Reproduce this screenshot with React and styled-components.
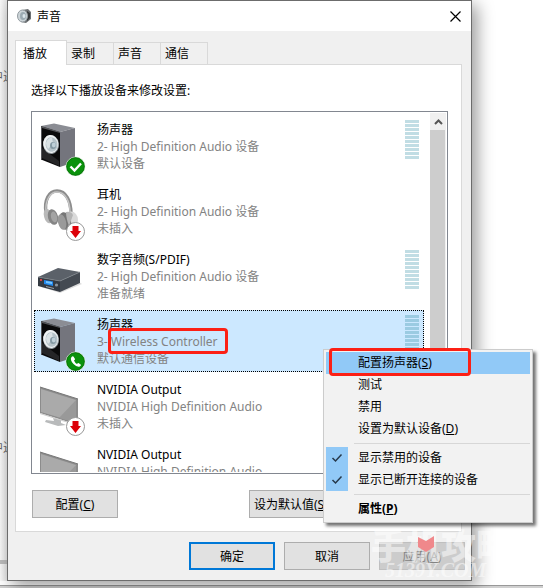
import React, { useState } from 'react'
import styled, { createGlobalStyle } from 'styled-components'

const devices = [
  { id: 1, name: '扬声器', driver: '2- High Definition Audio 设备', status: '默认设备', icon: 'speaker', badge: 'ok', meter: true },
  { id: 2, name: '耳机', driver: '2- High Definition Audio 设备', status: '未插入', icon: 'headphones', badge: 'unplugged' },
  { id: 3, name: '数字音频(S/PDIF)', driver: '2- High Definition Audio 设备', status: '准备就绪', icon: 'digital', meter: true },
  { id: 4, name: '扬声器', prefix: '3- ', driver: 'Wireless Controller', status: '默认通信设备', icon: 'speaker', badge: 'phone', meter: true },
  { id: 5, name: 'NVIDIA Output', driver: 'NVIDIA High Definition Audio', status: '未插入', icon: 'monitor', badge: 'unplugged' },
  { id: 6, name: 'NVIDIA Output', driver: 'NVIDIA High Definition Audio', status: '未插入', icon: 'monitor', badge: 'unplugged' },
]

const tabs = ['播放', '录制', '声音', '通信']

function Speaker() {
  return (
    <>
      <path d="M6 10 L19 7.500 L40 12 L25 16Z" fill="#8b8d94" />
      <path d="M25 16 L40 12 V46 L25 51Z" fill="#74757d" />
      <path d="M6 10 L25 16 V51 L6 43.500Z" fill="#0a0a0b" />
      <path d="M6 10 L25 16 V17 L7 12 V43 L6 43Z" fill="#55565a" />
      <path d="M7 32 L24 45 V50 L7 42Z" fill="#252527" />
      <ellipse cx="16" cy="28.500" rx="8" ry="9.500" fill="#8e969b" transform="rotate(-8 16 28.500)" />
      <ellipse cx="15.800" cy="28" rx="7.500" ry="9" fill="#eef1f2" transform="rotate(-8 15.800 28)" />
      <ellipse cx="16.500" cy="28.500" rx="6" ry="7.200" fill="#b6c3c9" transform="rotate(-8 16.500 28.500)" />
      <path d="M11 27 Q13 21.500 17 21.500 L18 28 L13 33 Q11 30 11 27Z" fill="#dae2e5" />
      <ellipse cx="18" cy="29.500" rx="3" ry="3.500" fill="#8499a3" />
      <ellipse cx="18.800" cy="29" rx="2" ry="2.400" fill="#bfd0d8" />
    </>
  )
}

function Headphones() {
  return (
    <>
      <path d="M11 32 C9 19 14 10 22 10 C31 10 36 20 36 33" fill="none" stroke="#8d8d8d" strokeWidth="3.4" />
      <path d="M11 31 C10 19 15 11 22 11 C30 11 35 20 35 31" fill="none" stroke="#c6c6c6" strokeWidth="1.4" />
      <ellipse cx="13" cy="35" rx="4" ry="7.5" fill="#b9b9b9" transform="rotate(-14 13 35)" />
      <ellipse cx="18" cy="36" rx="5" ry="8" fill="#858585" transform="rotate(-14 18 36)" />
      <ellipse cx="19" cy="36" rx="3" ry="5.5" fill="#a4a4a4" transform="rotate(-14 19 36)" />
      <ellipse cx="36" cy="39" rx="7" ry="8.5" fill="#dadada" />
      <ellipse cx="30" cy="40" rx="6" ry="9" fill="#777" transform="rotate(-14 30 40)" />
      <ellipse cx="27" cy="41" rx="4" ry="8" fill="#9a9a9a" transform="rotate(-14 27 41)" />
      <path d="M31 31 Q36 30 38 34 L34 45 Q31 37 31 31Z" fill="#b5b5b5" />
    </>
  )
}

function DigitalBox() {
  return (
    <>
      <path d="M6 41 L25 47 L47 38 L44 36Z" fill="#ddd" />
      <path d="M3 31 L23 22 L45 26 L25 35Z" fill="#5b6169" />
      <path d="M3 31 L25 35 V46 L3 40Z" fill="#343a42" />
      <path d="M25 35 L45 26 V37 L25 46Z" fill="#444a52" />
      <path d="M3 31 L25 35 L45 26" fill="none" stroke="#80868d" strokeWidth="0.7" />
      <path d="M9 34 L18 35.5 V40 L9 38Z" fill="#2389ee" />
      <path d="M11 35 L17 36 V38 L11 37Z" fill="#75c5ff" />
      <path d="M11 40.5 L19 42.5" stroke="#9ba0a5" strokeWidth="1" />
      <rect x="5" y="33" width="2" height="2" fill="#d1454b" />
      <circle cx="21.5" cy="39" r="1.6" fill="#8c949c" />
    </>
  )
}

function Monitor() {
  return (
    <>
      <path d="M18 42 L26 44 L26 47 L31 49 L23 50 L10 46 L11 44 L19 45Z" fill="#b8babb" />
      <path d="M5 11 L43 23 V49 L5 37Z" fill="#8c8c8c" />
      <path d="M6 13 L41 24 V46.500 L6 36Z" fill="#aaa" />
      <path d="M41 24 L24 42 L41 46.500Z" fill="#999" />
      <path d="M5 11 L43 23" stroke="#777" strokeWidth="1" />
      <path d="M5 37.500 L43 49.500" stroke="#ccc" strokeWidth="1" />
    </>
  )
}

const icons = { speaker: Speaker, headphones: Headphones, digital: DigitalBox, monitor: Monitor }

function Badge({ kind }) {
  if (kind === 'unplugged') {
    return (
      <>
        <circle cx="40.500" cy="50.500" r="9" fill="#fff" stroke="#999" />
        <path d="M37.500 45 H43.500 V50 H46 L40.500 57 L35 50 H37.500Z" fill="#dc0008" />
      </>
    )
  }
  return (
    <>
      <circle cx="40.500" cy="50.500" r="9.500" fill="#0a920c" stroke="#e4eee4" strokeWidth="0.8" />
      <circle cx="40.500" cy="50.500" r="8.800" fill="none" stroke="#087008" strokeWidth="0.8" />
      {kind === 'ok' && <path d="M35.500 50.500 L39.500 54.500 L46 47.500" fill="none" stroke="#fff" strokeWidth="2.400" />}
      {kind === 'phone' && (
        <path
          d="M36.500 46 Q38 44.500 38.800 46 L40 48 Q40.200 48.800 39 49.500 Q40 52 42 53 Q43 51.800 43.800 52.200 L45.700 53.400 Q46.500 54.500 44.800 55.500 Q42 56.500 38.500 53 Q34.500 48.500 36.500 46Z"
          fill="#fff"
        />
      )}
    </>
  )
}

function DeviceIcon({ icon, badge }) {
  const Drawing = icons[icon]
  return (
    <svg width="56" height="60" viewBox="0 0 56 60" aria-hidden="true">
      <Drawing />
      {badge && <Badge kind={badge} />}
    </svg>
  )
}

function Check() {
  return (
    <svg width="12" height="10" viewBox="0 0 12 10" fill="none" stroke="#26384a" strokeWidth="1.500" aria-hidden="true">
      <path d="M1.500 5 L4.500 8 L10.500 1.500" />
    </svg>
  )
}

function App() {
  const [activeTab, setActiveTab] = useState('播放')
  const [selected, setSelected] = useState(4)

  return (
    <Page>
      <GlobalStyle />
      <Desktop>
        <Behind>
          <span>中进</span>
          <span>中进</span>
          <Rule />
        </Behind>
        <Dialog role="dialog" aria-label="声音">
          <TitleBar>
            <svg width="14" height="14" viewBox="0 0 14 14" aria-hidden="true">
              <path d="M5 1 L11 0 L14 3 V10 L9 14 L4 13Z" fill="#6d7174" />
              <path d="M10 2 L13 4 V9 L10 12Z" fill="#35383a" />
              <ellipse cx="5.500" cy="7" rx="5" ry="6" fill="#ccd4d8" stroke="#959da2" />
              <ellipse cx="6" cy="7" rx="3" ry="4" fill="#9cabb3" />
              <ellipse cx="7" cy="7" rx="1.500" ry="2" fill="#dce7ec" />
            </svg>
            <Title>声音</Title>
            <CloseButton aria-label="关闭">
              <svg width="11" height="11" viewBox="0 0 11 11" stroke="#000" strokeWidth="1.200" aria-hidden="true">
                <path d="M0.500 0.500 L10.500 10.500 M10.500 0.500 L0.500 10.500" />
              </svg>
            </CloseButton>
          </TitleBar>

          <Tabs role="tablist">
            {tabs.map((tab) => (
              <Tab key={tab} role="tab" aria-selected={tab === activeTab} $active={tab === activeTab} onClick={() => setActiveTab(tab)}>
                {tab}
              </Tab>
            ))}
          </Tabs>

          <Panel role="tabpanel">
            <Hint id="hint">选择以下播放设备来修改设置:</Hint>
            <ListBox>
              <Devices role="listbox" aria-labelledby="hint">
                {devices.map((device) => (
                  <Device key={device.id} role="option" aria-selected={device.id === selected} $selected={device.id === selected} onClick={() => setSelected(device.id)}>
                    <DeviceIcon icon={device.icon} badge={device.badge} />
                    <DeviceText>
                      <DeviceName>{device.name}</DeviceName>
                      <span>
                        {device.prefix}
                        {device.prefix ? <Marked>{device.driver}</Marked> : device.driver}
                      </span>
                      <span>{device.status}</span>
                    </DeviceText>
                    {device.meter && <Meter $selected={device.id === selected} />}
                  </Device>
                ))}
              </Devices>
              <ScrollBar>
                <ScrollButton aria-label="向上滚动">
                  <svg width="9" height="6" viewBox="0 0 9 6" fill="none" stroke="#555" strokeWidth="2" aria-hidden="true">
                    <path d="M1 5 L4.500 1.500 L8 5" />
                  </svg>
                </ScrollButton>
                <Thumb />
              </ScrollBar>
            </ListBox>
            <PanelButtons>
              <Button>配置(<u>C</u>)</Button>
              <SplitButton>设为默认值(<u>S</u>)</SplitButton>
            </PanelButtons>
          </Panel>

          <Actions>
            <Button $primary>确定</Button>
            <Button>取消</Button>
            <Button disabled>应用(<u>A</u>)</Button>
          </Actions>

          <Menu role="menu">
            <MenuItem role="menuitem" $hover><Gutter /><Label>配置扬声器(<u>S</u>)</Label></MenuItem>
            <MenuItem role="menuitem"><Gutter /><Label>测试</Label></MenuItem>
            <MenuItem role="menuitem"><Gutter /><Label>禁用</Label></MenuItem>
            <MenuItem role="menuitem"><Gutter /><Label>设置为默认设备(<u>D</u>)</Label></MenuItem>
            <Separator />
            <MenuItem role="menuitemcheckbox" aria-checked="true"><Gutter $checked><Check /></Gutter><Label>显示禁用的设备</Label></MenuItem>
            <MenuItem role="menuitemcheckbox" aria-checked="true"><Gutter $checked><Check /></Gutter><Label>显示已断开连接的设备</Label></MenuItem>
            <Separator />
            <MenuItem role="menuitem" $bold><Gutter /><Label>属性(<u>P</u>)</Label></MenuItem>
          </Menu>

          <Watermark>
            <strong>手机攻略</strong>
            <em>5139Y.COM</em>
            <svg width="18" height="17" viewBox="0 0 18 17" aria-hidden="true">
              <path d="M1 1 L9 5 L17 0 V11 L9 16 L1 11Z" fill="#f0888b" />
            </svg>
          </Watermark>
        </Dialog>
      </Desktop>
      <Footer />
    </Page>
  )
}

const GlobalStyle = createGlobalStyle`
  * {
    box-sizing: border-box;
  }
  body {
    margin: 0;
    background: #fff;
    overflow: hidden;
    color: #000;
    font: 12px/17px "Noto Sans", "Noto Sans CJK SC", sans-serif;
  }
  button {
    margin: 0;
    padding: 0;
    color: inherit;
    font: inherit;
  }
`

const Page = styled.div`
  display: flex;
  flex-direction: column;
`

const Desktop = styled.div`
  display: flex;
  padding-right: 71px;
`

const Behind = styled.div`
  display: flex;
  flex-direction: column;
  align-items: flex-end;
  width: 7px;
  background: linear-gradient(90deg, #f8f8f8, #e4e4e4);
  color: #666;
  white-space: nowrap;
  span {
    width: 16px;
    margin-top: 68px;
  }
  span + span {
    margin-top: 354px;
  }
`

const Rule = styled.div`
  width: 7px;
  height: 4px;
  margin-top: 104px;
  background: #bbb;
`

const Dialog = styled.main`
  position: relative;
  flex: 1;
  min-width: 0;
  border: 1px solid #6c6c6c;
  background: #f0f0f0;
  box-shadow: 5px 5px 16px rgba(0, 0, 0, 0.4);
`

const TitleBar = styled.header`
  display: flex;
  align-items: center;
  gap: 6px;
  height: 30px;
  padding-left: 9px;
  background: #fff;
`

const Title = styled.h1`
  flex: 1;
  margin: 0;
  font-size: 12px;
  font-weight: 400;
`

const CloseButton = styled.button`
  display: flex;
  align-items: center;
  justify-content: center;
  width: 31px;
  height: 30px;
  border: 0;
  background: none;
`

const Tabs = styled.div`
  display: flex;
  align-items: flex-end;
  padding: 9px 7px 0;
`

const Tab = styled.button`
  position: relative;
  width: ${({ $active }) => ($active ? 52 : 47)}px;
  height: ${({ $active }) => ($active ? 25 : 22)}px;
  margin-bottom: ${({ $active }) => ($active ? -1 : 0)}px;
  padding-left: ${({ $active }) => ($active ? 7 : 4)}px;
  border: solid #d9d9d9;
  border-width: ${({ $active }) => ($active ? '1px 1px 0' : '1px 1px 0 0')};
  background: ${({ $active }) => ($active ? '#fff' : '#f0f0f0')};
  text-align: left;
  z-index: ${({ $active }) => ($active ? 1 : 0)};
`

const Panel = styled.section`
  margin: 0 9px 0 7px;
  padding: 17px 13px 13px 15px;
  border: 1px solid #d9d9d9;
  background: #fff;
`

const Hint = styled.p`
  margin: 0 0 12px;
`

const ListBox = styled.div`
  display: flex;
  height: 363px;
  padding: 1px 1px 1px 2px;
  border: 1px solid #828790;
  overflow: hidden;
`

const Devices = styled.ul`
  flex: 1;
  margin: 0 6px 0 0;
  padding: 2px 0 0;
  overflow: hidden;
  list-style: none;
`

const Device = styled.li`
  display: flex;
  gap: 6px;
  height: 62px;
  margin-bottom: 3px;
  border: 1px dotted ${({ $selected }) => ($selected ? '#000' : 'transparent')};
  background: ${({ $selected }) => ($selected ? '#cce8ff' : 'transparent')};
  svg {
    flex: none;
  }
`

const DeviceText = styled.div`
  display: flex;
  flex: 1;
  flex-direction: column;
  padding-top: 5px;
  color: #838383;
  white-space: nowrap;
`

const DeviceName = styled.span`
  color: #000;
`

const Marked = styled.mark`
  position: relative;
  background: none;
  color: inherit;
  &::after {
    content: '';
    position: absolute;
    inset: -5px -10px -4px -3px;
    border: 3px solid #fc2015;
    border-radius: 4px;
  }
`

const Meter = styled.div`
  width: 14px;
  height: 39px;
  margin: 4px 4px 0 0;
  background: repeating-linear-gradient(
    ${({ $selected }) => ($selected ? '#9bcbe2' : '#c1dde4')} 0 3px,
    transparent 3px 4px
  );
`

const ScrollBar = styled.div`
  display: flex;
  flex-direction: column;
  width: 16px;
  background: #f0f0f0;
`

const ScrollButton = styled.button`
  display: flex;
  align-items: center;
  justify-content: center;
  height: 17px;
  border: 0;
  background: #f0f0f0;
`

const Thumb = styled.div`
  flex: 1;
  margin-right: 1px;
  background: #cdcdcd;
`

const Button = styled.button`
  width: 86px;
  height: 28px;
  border: ${({ $primary }) => ($primary ? '2px solid #0078d7' : '1px solid #adadad')};
  background: #e1e1e1;
  &:disabled {
    border-color: #bfbfbf;
    background: #ccc;
    color: #838383;
  }
`

const SplitButton = styled(Button)`
  width: 120px;
  padding-left: 4px;
  text-align: left;
`

const PanelButtons = styled.div`
  display: flex;
  justify-content: space-between;
  padding: 16px 79px 0 1px;
`

const Actions = styled.div`
  display: flex;
  justify-content: flex-end;
  gap: 9px;
  padding: 10px 6px;
`

const Menu = styled.div`
  position: absolute;
  top: 348px;
  right: -62px;
  width: 210px;
  padding: 2px;
  border: 1px solid #ccc;
  background: #f2f2f2;
  box-shadow: 3px 3px 3px rgba(0, 0, 0, 0.55);
  z-index: 2;
`

const MenuItem = styled.button`
  position: relative;
  display: flex;
  align-items: center;
  gap: 10px;
  width: 100%;
  height: 22px;
  border: 0;
  background: ${({ $hover }) => ($hover ? '#91c9f7' : 'transparent')};
  font-weight: ${({ $bold }) => ($bold ? 700 : 400)};
  text-align: left;
  &:first-child::after {
    content: '';
    position: absolute;
    inset: -4px 59px -2px 3px;
    border: 3px solid #fc2015;
    border-radius: 4px;
  }
`

const Label = styled.span`
  padding-bottom: 2px;
`

const Gutter = styled.span`
  display: flex;
  align-items: center;
  justify-content: center;
  width: 22px;
  height: 22px;
  background: ${({ $checked }) => ($checked ? '#91c9f7' : 'transparent')};
`

const Separator = styled.div`
  height: 1px;
  margin: 3px 0 3px 28px;
  background: #d7d7d7;
`

const Watermark = styled.div`
  position: absolute;
  right: -42px;
  bottom: 2px;
  display: flex;
  flex-direction: column;
  width: 142px;
  color: rgba(255, 255, 255, 0.5);
  white-space: nowrap;
  pointer-events: none;
  z-index: 1;
  strong {
    font-size: 35px;
    font-weight: 900;
    line-height: 32px;
  }
  em {
    padding-left: 14px;
    font: italic 700 20px/16px "Liberation Serif", serif;
  }
  svg {
    position: absolute;
    top: 6px;
    left: 46px;
  }
`

const Footer = styled.footer`
  height: 7px;
  padding-top: 4px;
  &::after {
    content: '';
    display: block;
    height: 3px;
    border-top: 1px solid #999;
    background: #d0d0d0;
  }
`

export default App
